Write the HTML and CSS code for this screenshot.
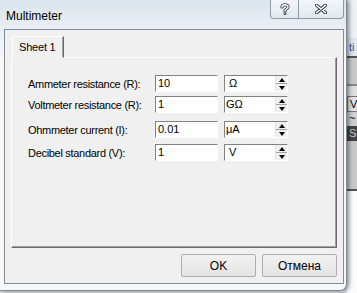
FILE: index.html
```html
<!DOCTYPE html>
<html lang="en">
  <head>
    <meta charset="UTF-8" />
    <title>Multimeter</title>
    <link rel="stylesheet" href="styles.css">
  </head>
  <body>
    <div class="window">
      <div class="titlebar">
        <span class="title">Multimeter</span>
        <div class="caption">
          <div class="cap help">
            <svg width="10" height="12" viewBox="0 0 10 12">
              <path d="M2 4 C2 1 8 1 8 4 C8 6 5 6 5 8" fill="none" stroke="#3c4650" stroke-width="3.2" stroke-linecap="round"/>
              <circle cx="5" cy="10.6" r="1.5" fill="#3c4650"/>
              <path d="M2 4 C2 1 8 1 8 4 C8 6 5 6 5 8" fill="none" stroke="#fff" stroke-width="1.4" stroke-linecap="round"/>
              <circle cx="5" cy="10.6" r="0.6" fill="#fff"/>
            </svg>
          </div>
          <div class="cap close">
            <svg width="12" height="10" viewBox="0 0 12 10">
              <path d="M1.5 1.2 L10.5 8.8 M10.5 1.2 L1.5 8.8" stroke="#3c4650" stroke-width="3.4" stroke-linecap="round"/>
              <path d="M1.5 1.2 L10.5 8.8 M10.5 1.2 L1.5 8.8" stroke="#fff" stroke-width="1.4" stroke-linecap="round"/>
            </svg>
          </div>
        </div>
      </div>

      <div class="client">
        <div class="tabs">
          <div class="tab">Sheet 1</div>
        </div>
        <div class="page">
          <div class="row">
            <span class="label">Ammeter resistance (R):</span>
            <span class="field">10</span>
            <span class="unit"><span class="unit-text">&nbsp;Ω</span><span class="spin"><i class="up"></i><i class="down"></i></span></span>
          </div>
          <div class="row row-near">
            <span class="label">Voltmeter resistance (R):</span>
            <span class="field">1</span>
            <span class="unit"><span class="unit-text">GΩ</span><span class="spin"><i class="up"></i><i class="down"></i></span></span>
          </div>
          <div class="row row-far">
            <span class="label">Ohmmeter current (I):</span>
            <span class="field">0.01</span>
            <span class="unit"><span class="unit-text">μA</span><span class="spin"><i class="up"></i><i class="down"></i></span></span>
          </div>
          <div class="row row-mid">
            <span class="label">Decibel standard (V):</span>
            <span class="field">1</span>
            <span class="unit"><span class="unit-text">&nbsp;V</span><span class="spin"><i class="up"></i><i class="down"></i></span></span>
          </div>
        </div>
        <div class="actions">
          <button class="btn">OK</button>
          <button class="btn">Отмена</button>
        </div>
      </div>
    </div>

    <div class="behind">
      <div class="b-top"></div>
      <div class="b-tab">ti</div>
      <div class="b-line"></div>
      <div class="b-gray"></div>
      <div class="b-line light"></div>
      <div class="b-pale"></div>
      <div class="b-box">V</div>
      <div class="b-wave">~</div>
      <div class="b-dark">S</div>
      <div class="b-gray tall"></div>
      <div class="b-line"></div>
      <div class="b-white"></div>
    </div>
  </body>
</html>
```

FILE: styles.css
```css
body {
  margin: 0;
  width: 357px;
  height: 293px;
  overflow: hidden;
  display: flex;
  background: #d9dee4;
  font-family: "Liberation Sans", Arial, sans-serif;
}

/* dialog window */
.window {
  width: 347px;
  height: 291px;
  flex: none;
  box-sizing: border-box;
  display: flex;
  flex-direction: column;
  padding: 0 2px 6px 4px;
  border-right: 1px solid #7f8a95;
  border-bottom: 1px solid #7f8a95;
  border-bottom-right-radius: 7px;
  background: linear-gradient(180deg, #dbe4ec 0, #e9eef3 28px, #f6f8fa 60px, #f6f8fa 100%);
  box-shadow: 2px 0 4px rgba(0, 0, 0, 0.45);
  position: relative;
  z-index: 1;
}

.titlebar {
  height: 29px;
  flex: none;
  display: flex;
  justify-content: space-between;
  align-items: flex-start;
}

.title {
  font-size: 12px;
  color: #000;
  padding: 9px 0 0 2px;
}

.caption {
  display: flex;
}

.cap {
  height: 19px;
  box-sizing: border-box;
  display: flex;
  align-items: center;
  justify-content: center;
  border: 1px solid #8c99a6;
  border-top: none;
  background: linear-gradient(180deg, #f3f6f9, #e1e8ef);
}

.cap.help {
  width: 28px;
  border-right: none;
  border-bottom-left-radius: 4px;
}

.cap.close {
  width: 46px;
  border-bottom-right-radius: 4px;
}

/* client area */
.client {
  flex: 1;
  display: flex;
  flex-direction: column;
  padding: 6px 6px 0 6px;
  border: 1px solid #838b94;
  background: #f0f0f0;
}

.tabs {
  display: flex;
  height: 22px;
  padding-left: 1px;
  margin-bottom: -1px;
  position: relative;
  z-index: 1;
}

.tab {
  width: 52px;
  box-sizing: border-box;
  padding: 4px 0 0 6px;
  border: 1px solid;
  border-color: #fff #696969 transparent #fff;
  box-shadow: inset -1px 0 #a0a0a0;
  background: #f0f0f0;
  font-size: 11px;
  letter-spacing: -0.2px;
}

.page {
  height: 191px;
  box-sizing: border-box;
  display: flex;
  flex-direction: column;
  padding: 17px 0 0 16px;
  border: 1px solid;
  border-color: #fff #696969 #696969 #fff;
  box-shadow: inset -1px -1px #a0a0a0;
}

.row {
  display: flex;
  align-items: center;
  height: 17px;
  font-size: 11px;
}

.row-near { margin-top: 4px; }
.row-far { margin-top: 8px; }
.row-mid { margin-top: 6px; }

.label {
  width: 127px;
  letter-spacing: -0.3px;
}

.field,
.unit {
  height: 17px;
  box-sizing: border-box;
  border: 1px solid;
  border-color: #828282 #fff #fff #828282;
  background: #fff;
}

.field {
  width: 63px;
  padding: 1px 0 0 2px;
}

.unit {
  width: 64px;
  margin-left: 6px;
  display: flex;
}

.unit-text {
  flex: 1;
  padding: 1px 0 0 1px;
}

.spin {
  width: 11px;
  display: flex;
  flex-direction: column;
  background: #f0f0f0;
  border-left: 1px solid #e3e3e3;
}

.spin i {
  flex: 1;
  display: flex;
  align-items: center;
  justify-content: center;
}

.spin .down {
  border-top: 1px solid #a0a0a0;
}

.spin i::before {
  content: "";
  border-left: 3px solid transparent;
  border-right: 3px solid transparent;
}

.spin .up::before {
  border-bottom: 4px solid #000;
}

.spin .down::before {
  border-top: 4px solid #000;
}

.actions {
  display: flex;
  justify-content: flex-end;
  gap: 6px;
  margin-top: 6px;
}

.btn {
  width: 75px;
  height: 23px;
  padding: 0;
  border: 1px solid #adadad;
  border-radius: 2px;
  background: linear-gradient(180deg, #f2f2f2, #e3e3e3);
  font-family: "Liberation Sans", Arial, sans-serif;
  font-size: 12px;
  color: #000;
}

/* the other window, behind */
.behind {
  flex: 1;
  display: flex;
  flex-direction: column;
  overflow: hidden;
  font-size: 11px;
}

.b-top { height: 38px; background: #eef1f4; }
.b-tab { height: 18px; background: #dfe6ee; color: #3a5a9a; padding-left: 2px; line-height: 18px; }
.b-line { height: 2px; background: #555; }
.b-line.light { background: #888; }
.b-gray { height: 26px; background: #c9c9c9; }
.b-gray.tall { height: 48px; }
.b-pale { height: 10px; background: #dedede; }
.b-box { height: 14px; background: #e4e4e4; border: 1px solid #777; border-right: none; padding-left: 2px; line-height: 14px; }
.b-wave { height: 14px; background: #cfcfcf; padding-left: 2px; line-height: 12px; }
.b-dark { height: 15px; background: #454545; color: #ccc; padding-left: 2px; line-height: 15px; }
.b-white { flex: 1; background: #fafafa; }
```
